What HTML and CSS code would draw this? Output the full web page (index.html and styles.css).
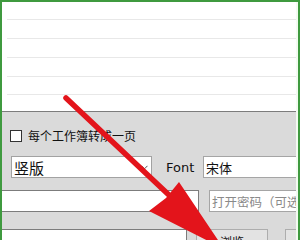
FILE: index.html
```html
<!DOCTYPE html>
<html>
<head>
    <title>Excel to PDF</title>
    <link rel="stylesheet" href="styles.css">
</head>
<body>
    <div class="frame">
        <div class="list">
            <div class="list-row first"></div>
            <div class="list-row"></div>
            <div class="list-row"></div>
            <div class="list-row"></div>
            <div class="list-row last"></div>
        </div>

        <div class="panel">
            <div class="opt-row">
                <span class="check"></span>
                <span class="opt-label">每个工作簿转成一页</span>
            </div>

            <div class="field-row">
                <div class="select">
                    <span>竖版</span>
                    <svg class="chevron" width="7" height="5" viewBox="0 0 7 5">
                        <path d="M0.5 0.8 L3.5 3.8 L6.5 0.8" fill="none" stroke="#555" stroke-width="1"/>
                    </svg>
                </div>
                <span class="font-label">Font</span>
                <div class="input font-input">宋体</div>
            </div>

            <div class="field-row pass-row">
                <div class="input path-input"></div>
                <div class="input pass-input">打开密码（可选）</div>
            </div>

            <div class="field-row out-row">
                <div class="input out-input"></div>
                <div class="btn">浏览</div>
                <div class="btn btn-more"></div>
            </div>
        </div>
    </div>

    <svg class="arrow" width="300" height="240" viewBox="0 0 300 240">
        <line x1="66" y1="98" x2="170" y2="196" stroke="#e3141b" stroke-width="5.5" stroke-linecap="round"/>
        <polygon points="179,182 224,249 149,211 166,198" fill="#e3141b"/>
    </svg>
</body>
</html>
```

FILE: styles.css
```css
body {
    margin: 0;
    width: 300px;
    height: 240px;
    overflow: hidden;
    font-family: "Noto Sans CJK SC", sans-serif;
    position: relative;
}

.frame {
    box-sizing: border-box;
    width: 300px;
    height: 240px;
    border: 2px solid #3f9a3f;
    border-bottom: none;
    background-color: #f3fbf1;
    overflow: hidden;
}

.list {
    height: 109px;
    margin-right: 2px;
    background-color: #ffffff;
    padding-left: 5px;
}

.list-row {
    height: 18px;
    border-bottom: 1px solid #e8e8e8;
}
.list-row.first {
    height: 17px;
}
.list-row.last {
    height: 17px;
}

.panel {
    height: 130px;
    margin-right: 2px;
    background-color: #dadada;
    border-top: 1px solid #7c7c7c;
    overflow: hidden;
}

.opt-row {
    display: flex;
    align-items: center;
    height: 14px;
    margin-top: 17px;
    padding-left: 8px;
}

.check {
    box-sizing: border-box;
    width: 12px;
    height: 12px;
    border: 1px solid #333333;
    background-color: #ffffff;
    margin-right: 6px;
    flex-shrink: 0;
}

.opt-label {
    font-size: 12px;
    line-height: 14px;
    color: #111111;
    white-space: nowrap;
}

.field-row {
    display: flex;
    align-items: center;
    height: 22px;
    margin-top: 13px;
}

.select {
    box-sizing: border-box;
    width: 141px;
    height: 22px;
    margin-left: 9px;
    border: 1px solid #a2a2a2;
    background-color: #ffffff;
    display: flex;
    align-items: center;
    justify-content: space-between;
    padding: 0 3px 0 2px;
    font-size: 15px;
    color: #111111;
    flex-shrink: 0;
}

.chevron {
    margin-top: 1px;
}

.font-label {
    margin-left: 14px;
    width: 28px;
    font-family: "DejaVu Sans", sans-serif;
    font-size: 13px;
    color: #111111;
    flex-shrink: 0;
}

.input {
    box-sizing: border-box;
    height: 22px;
    background-color: #ffffff;
    border: 1px solid #a5a5a5;
    display: flex;
    align-items: center;
    padding-left: 2px;
    font-size: 13px;
    color: #111111;
    white-space: nowrap;
    flex-shrink: 0;
}

.font-input {
    margin-left: 9px;
    width: 110px;
}

.pass-row {
    margin-top: 12px;
}

.path-input {
    width: 197px;
    border-color: #7c7c7c;
    border-left: none;
}

.pass-input {
    margin-left: 10px;
    width: 110px;
    color: #8a8a8a;
    font-size: 12.5px;
}

.out-row {
    margin-top: 17px;
    align-items: flex-start;
}

.out-input {
    width: 185px;
    border-color: #7c7c7c;
    border-left: none;
}

.btn {
    box-sizing: border-box;
    width: 72px;
    height: 22px;
    margin-left: 9px;
    border: 1px solid #adadad;
    background-color: #e3e3e3;
    font-size: 12px;
    text-align: center;
    padding-top: 3px;
    color: #111111;
    flex-shrink: 0;
}

.btn-more {
    margin-left: 17px;
    width: 40px;
}

.arrow {
    position: absolute;
    left: 0;
    top: 0;
    pointer-events: none;
}
```
